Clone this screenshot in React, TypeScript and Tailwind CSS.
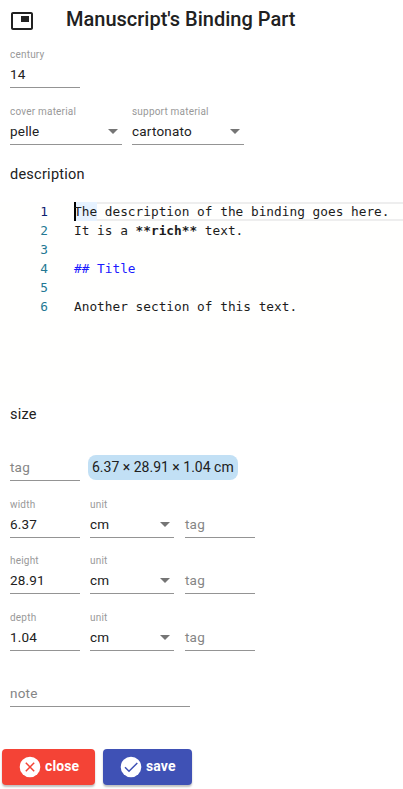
import React from "react";

type FieldProps = {
  label?: string;
  value?: string;
  placeholder?: string;
  width: string;
  select?: boolean;
};

function Field({ label, value, placeholder, width, select }: FieldProps) {
  return (
    <div className={`flex h-10 flex-col border-b border-[#949494] ${width}`}>
      <div className="h-3.5 whitespace-nowrap text-[10px] leading-[14px] tracking-[0.2px] text-[#999]">{label}</div>
      <div className="flex h-[25px] items-center justify-between text-[13.5px] tracking-[0.2px]">
        <span className={value ? "text-[#212121]" : "text-[#858585]"}>{value ?? placeholder}</span>
        {select && (
          <svg width="10" height="5" viewBox="0 0 10 5" className="mr-1 fill-[#757575]">
            <path d="M0 0h10L5 5z" />
          </svg>
        )}
      </div>
    </div>
  );
}

function Editor() {
  return (
    <div className="flex h-[201px] bg-[#fffffe] pl-2.5 font-['DejaVu_Sans_Mono',monospace] text-[12.79px] leading-[19px]">
      <div className="w-[38px] text-right text-[#237893]">
        <div className="text-[#0b216f]">1</div>
        <div>2</div>
        <div>3</div>
        <div>4</div>
        <div>5</div>
        <div>6</div>
      </div>
      <div className="ml-[26px] flex-1 whitespace-pre text-[#1c1c1c]">
        <div className="relative h-[19px] border-y-2 border-[#eee] leading-[15px]">
          <span className="absolute -top-0.5 left-0 h-[19px] w-[23px] bg-[#e6f2ff]" />
          <span className="absolute -top-0.5 left-0 h-[19px] w-0.5 bg-black" />
          <span className="relative">The description of the binding goes here.</span>
        </div>
        <div className="h-[19px]">It is a <b>**rich**</b> text.</div>
        <div className="h-[19px]" />
        <div className="h-[19px] text-[#1a1aff]">## Title</div>
        <div className="h-[19px]" />
        <div className="h-[19px]">Another section of this text.</div>
      </div>
    </div>
  );
}

const sizes = [
  { label: "width", value: "6.37", row: "mt-[17px]" },
  { label: "height", value: "28.91", row: "mt-4" },
  { label: "depth", value: "1.04", row: "mt-[17px]" },
];

export default function App() {
  return (
    <div className="h-[789px] w-[403px] overflow-hidden bg-white font-[Roboto,sans-serif] text-[#212121]">
      <header className="flex h-12 items-start pl-2.5">
        <svg width="24" height="24" viewBox="0 0 24 24" className="mt-[9px] fill-[#212121]">
          <path d="M19 7h-8v6h8V7zm2-4H3c-1.1 0-2 .9-2 2v14c0 1.1.9 1.98 2 1.98h18c1.1 0 2-.88 2-1.98V5c0-1.1-.9-2-2-2zm0 16.01H3V4.98h18v14.03z" />
        </svg>
        <h1 className="ml-8 mt-[5px] text-[20px] font-medium leading-7 tracking-normal">Manuscript's Binding Part</h1>
      </header>
      <div className="pl-2.5">
        <Field label="century" value="14" width="w-[70px]" />
        <div className="mt-[17px] flex gap-2.5">
          <Field label="cover material" value="pelle" width="w-28" select />
          <Field label="support material" value="cartonato" width="w-28" select />
        </div>
        <h2 className="flex h-[57px] items-center pt-[3px] text-[14.5px] tracking-[0.25px]">description</h2>
      </div>
      <Editor />
      <div className="pl-2.5">
        <h2 className="h-[38px] text-[14.5px] leading-6 tracking-[0.25px]">size</h2>
        <div className="flex gap-2">
          <Field placeholder="tag" width="w-[70px]" />
          <div className="mt-3.5 flex h-[25px] w-[150px] items-center whitespace-nowrap rounded-lg bg-[#c2e0f5] pl-1 text-[14px]">
            6.37 × 28.91 × 1.04 cm
          </div>
        </div>
        {sizes.map((s) => (
          <div key={s.label} className={`flex ${s.row}`}>
            <Field label={s.label} value={s.value} width="w-[70px]" />
            <div className="ml-2.5 flex gap-[11px]">
              <Field label="unit" value="cm" width="w-[84px]" select />
              <Field placeholder="tag" width="w-[70px]" />
            </div>
          </div>
        ))}
        <div className="mt-4">
          <Field placeholder="note" width="w-[180px]" />
        </div>
      </div>
      <div className="mt-[42px] flex gap-2 pl-0.5 text-[14px] font-bold text-white">
        <button className="flex h-9 w-[93px] items-center rounded bg-[#f44336] pl-4 shadow-[0_2px_2px_rgba(0,0,0,0.25)]">
          <svg width="24" height="24" viewBox="0 0 24 24" fill="none">
            <circle cx="12" cy="12" r="10.3" fill="white" />
            <path d="M7.8 7.8l8.4 8.4M16.2 7.8l-8.4 8.4" stroke="#f44336" strokeWidth="1.5" />
          </svg>
          <span className="mb-0.5 ml-[3px] tracking-[0.1px]">close</span>
        </button>
        <button className="flex h-9 w-[89px] items-center rounded bg-[#3f51b5] pl-4 shadow-[0_2px_2px_rgba(0,0,0,0.25)]">
          <svg width="24" height="24" viewBox="0 0 24 24" fill="none">
            <circle cx="12" cy="12" r="10.3" fill="white" />
            <path d="M6 12.3l4 4L18.3 8" stroke="#3f51b5" strokeWidth="1.5" />
          </svg>
          <span className="mb-0.5 ml-[3px] tracking-[0.1px]">save</span>
        </button>
      </div>
    </div>
  );
}
